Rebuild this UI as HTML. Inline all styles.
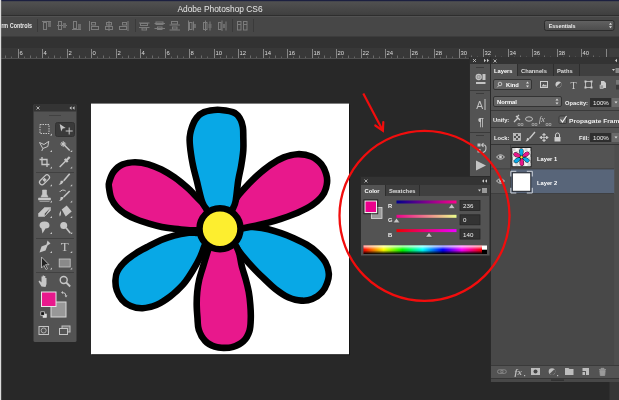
<!DOCTYPE html><html><head><meta charset="utf-8"><title>Adobe Photoshop CS6</title>
<style>html,body{margin:0;padding:0;background:#282828;overflow:hidden}svg{display:block;will-change:transform}text{font-family:"Liberation Sans",sans-serif}</style></head><body>
<svg width="619" height="400" viewBox="0 0 619 400">
<defs>
<linearGradient id="tb" x1="0" y1="0" x2="0" y2="1"><stop offset="0" stop-color="#535353"/><stop offset="1" stop-color="#3f3f3f"/></linearGradient>
<linearGradient id="dd" x1="0" y1="0" x2="0" y2="1"><stop offset="0" stop-color="#626262"/><stop offset="1" stop-color="#4c4c4c"/></linearGradient>
<linearGradient id="gr" x1="0" y1="0" x2="1" y2="0"><stop offset="0" stop-color="#00008c"/><stop offset="1" stop-color="#ff008c"/></linearGradient>
<linearGradient id="gg" x1="0" y1="0" x2="1" y2="0"><stop offset="0" stop-color="#ec008c"/><stop offset="1" stop-color="#ecff8c"/></linearGradient>
<linearGradient id="gb" x1="0" y1="0" x2="1" y2="0"><stop offset="0" stop-color="#ec0000"/><stop offset="1" stop-color="#ec00ff"/></linearGradient>
<linearGradient id="sp" x1="0" y1="0" x2="1" y2="0">
<stop offset="0" stop-color="#ff0000"/><stop offset="0.17" stop-color="#ffff00"/><stop offset="0.33" stop-color="#00ff00"/><stop offset="0.5" stop-color="#00ffff"/><stop offset="0.67" stop-color="#0000ff"/><stop offset="0.83" stop-color="#ff00ff"/><stop offset="1" stop-color="#ff0000"/></linearGradient>
<linearGradient id="spv" x1="0" y1="0" x2="0" y2="1"><stop offset="0" stop-color="#fff" stop-opacity="0.9"/><stop offset="0.45" stop-color="#fff" stop-opacity="0"/><stop offset="0.55" stop-color="#000" stop-opacity="0"/><stop offset="1" stop-color="#000" stop-opacity="1"/></linearGradient>
</defs>
<rect x="0" y="0" width="619" height="400" fill="#282828" />
<rect x="0" y="0" width="619" height="15" fill="url(#tb)" />
<rect x="0" y="0" width="619" height="1.2" fill="#1c2040" />
<text x="220" y="11.8" font-size="8.4" fill="#e6e6e6" font-weight="normal" text-anchor="middle" >Adobe Photoshop CS6</text>
<rect x="0" y="15" width="619" height="21.5" fill="#474747" />
<rect x="0" y="15" width="619" height="1" fill="#2e2e2e" />
<rect x="0" y="16" width="619" height="1" fill="#525252" />
<rect x="0" y="36" width="619" height="0.8" fill="#2a2a2a" />
<text transform="translate(1.2 28.4) scale(0.84 1)" font-size="6.5" fill="#e6e6e6" font-weight="bold" text-anchor="start" >rm Controls</text>
<rect x="37" y="19" width="1" height="13" fill="#3a3a3a" />
<rect x="135" y="19" width="1" height="13" fill="#3a3a3a" />
<rect x="232" y="19" width="1" height="13" fill="#3a3a3a" />
<rect x="253" y="19" width="1" height="13" fill="#3a3a3a" />
<rect x="42" y="21" width="9" height="1" fill="#7c7c7c" />
<rect x="43.5" y="22.5" width="3" height="7" fill="none" stroke="#7c7c7c" stroke-width="1"/>
<rect x="48" y="22" width="3" height="5" fill="#6c6c6c" />
<rect x="57" y="25" width="10" height="1" fill="#7c7c7c" />
<rect x="58.5" y="21.5" width="3" height="8" fill="none" stroke="#7c7c7c" stroke-width="1"/>
<rect x="63" y="23" width="3" height="5" fill="#6c6c6c" />
<rect x="72" y="29" width="9" height="1" fill="#7c7c7c" />
<rect x="73.5" y="21.5" width="3" height="7" fill="none" stroke="#7c7c7c" stroke-width="1"/>
<rect x="78" y="24" width="3" height="5" fill="#6c6c6c" />
<rect x="89" y="21" width="1" height="10" fill="#7c7c7c" />
<rect x="91.5" y="22.5" width="4" height="2.5" fill="none" stroke="#7c7c7c" stroke-width="1"/>
<rect x="91.5" y="26.5" width="7" height="3" fill="none" stroke="#7c7c7c" stroke-width="1"/>
<rect x="108.5" y="21" width="1" height="10" fill="#7c7c7c" />
<rect x="106.5" y="22.5" width="5" height="2.5" fill="none" stroke="#7c7c7c" stroke-width="1"/>
<rect x="105.5" y="26.5" width="7" height="3" fill="none" stroke="#7c7c7c" stroke-width="1"/>
<rect x="127.5" y="21" width="1" height="10" fill="#7c7c7c" />
<rect x="122.5" y="22.5" width="4" height="2.5" fill="none" stroke="#7c7c7c" stroke-width="1"/>
<rect x="119.5" y="26.5" width="7" height="3" fill="none" stroke="#7c7c7c" stroke-width="1"/>
<rect x="139" y="22.5" width="10.5" height="1" fill="#7c7c7c" />
<rect x="140.5" y="23.5" width="7" height="2" fill="none" stroke="#7c7c7c" stroke-width="1"/>
<rect x="139" y="27" width="10.5" height="1" fill="#7c7c7c" />
<rect x="142" y="28" width="4.5" height="2" fill="none" stroke="#7c7c7c" stroke-width="1"/>
<rect x="156.0" y="22" width="7" height="2.5" fill="none" stroke="#7c7c7c" stroke-width="1"/>
<rect x="154.5" y="23" width="10.5" height="1" fill="#7c7c7c" />
<rect x="157.5" y="27" width="4.5" height="2.5" fill="none" stroke="#7c7c7c" stroke-width="1"/>
<rect x="154.5" y="28" width="10.5" height="1" fill="#7c7c7c" />
<rect x="171.5" y="21.5" width="6" height="2.5" fill="none" stroke="#7c7c7c" stroke-width="1"/>
<rect x="169.5" y="24.5" width="10.5" height="1" fill="#7c7c7c" />
<rect x="172.5" y="27" width="4.5" height="2" fill="none" stroke="#7c7c7c" stroke-width="1"/>
<rect x="169.5" y="29.5" width="10.5" height="1" fill="#7c7c7c" />
<rect x="188" y="20.5" width="1" height="10.5" fill="#7c7c7c" />
<rect x="189.5" y="22.5" width="2.5" height="7" fill="none" stroke="#7c7c7c" stroke-width="1"/>
<rect x="193" y="21.5" width="1" height="9" fill="#7c7c7c" />
<rect x="194" y="24" width="2" height="4" fill="#6c6c6c" />
<rect x="205" y="20.5" width="1" height="10.5" fill="#7c7c7c" />
<rect x="203.5" y="22.5" width="3.5" height="7" fill="none" stroke="#7c7c7c" stroke-width="1"/>
<rect x="209.5" y="21.5" width="1" height="9" fill="#7c7c7c" />
<rect x="208.5" y="24" width="3" height="4" fill="#6c6c6c" />
<rect x="221.5" y="20.5" width="1" height="10.5" fill="#7c7c7c" />
<rect x="218.5" y="22.5" width="2.5" height="7" fill="none" stroke="#7c7c7c" stroke-width="1"/>
<rect x="225.5" y="21.5" width="1" height="9" fill="#7c7c7c" />
<rect x="223" y="24" width="2" height="4" fill="#6c6c6c" />
<rect x="237.5" y="21.5" width="3.5" height="8.5" fill="none" stroke="#7c7c7c" stroke-width="1"/>
<rect x="243.5" y="21.5" width="3.5" height="8.5" fill="none" stroke="#7c7c7c" stroke-width="1"/>
<rect x="238" y="24" width="3" height="1" fill="#7c7c7c" />
<rect x="244" y="24" width="3" height="1" fill="#7c7c7c" />
<rect x="544.500" y="20.500" width="69.500" height="10" rx="1.800" fill="url(#dd)" stroke="#2c2c2c"/>
<text transform="translate(548.7 27.7) scale(0.91 1)" font-size="6" fill="#eee" font-weight="bold" text-anchor="start" >Essentials</text>
<path d="M609 24.700 l1.500 -2 l1.500 2z M609 26.300 l1.500 2 l1.500 -2z" fill="#ddd"/>
<rect x="0" y="36" width="619" height="12" fill="#323232" />
<rect x="0" y="36" width="619" height="1" fill="#3c3c3c" />
<rect x="0" y="48" width="619" height="10" fill="#383838" />
<rect x="0" y="58" width="619" height="1" fill="#505050" />
<rect x="5" y="55.5" width="1" height="2.5" fill="#6c6c6c" />
<rect x="11" y="56.5" width="1" height="1.5" fill="#646464" />
<rect x="18" y="49" width="1" height="9" fill="#858585" />
<text x="19.6" y="55" font-size="5.9" fill="#dcdcdc" font-weight="normal" text-anchor="start" >6</text>
<rect x="24" y="56.5" width="1" height="1.5" fill="#646464" />
<rect x="30" y="55.5" width="1" height="2.5" fill="#6c6c6c" />
<rect x="36" y="56.5" width="1" height="1.5" fill="#646464" />
<rect x="42" y="49" width="1" height="9" fill="#858585" />
<text x="43.6" y="55" font-size="5.9" fill="#dcdcdc" font-weight="normal" text-anchor="start" >4</text>
<rect x="48" y="56.5" width="1" height="1.5" fill="#646464" />
<rect x="54" y="55.5" width="1" height="2.5" fill="#6c6c6c" />
<rect x="60" y="56.5" width="1" height="1.5" fill="#646464" />
<rect x="67" y="49" width="1" height="9" fill="#858585" />
<text x="68.6" y="55" font-size="5.9" fill="#dcdcdc" font-weight="normal" text-anchor="start" >2</text>
<rect x="73" y="56.5" width="1" height="1.5" fill="#646464" />
<rect x="79" y="55.5" width="1" height="2.5" fill="#6c6c6c" />
<rect x="85" y="56.5" width="1" height="1.5" fill="#646464" />
<rect x="91" y="49" width="1" height="9" fill="#858585" />
<text x="92.6" y="55" font-size="5.9" fill="#dcdcdc" font-weight="normal" text-anchor="start" >0</text>
<rect x="97" y="56.5" width="1" height="1.5" fill="#646464" />
<rect x="103" y="55.5" width="1" height="2.5" fill="#6c6c6c" />
<rect x="109" y="56.5" width="1" height="1.5" fill="#646464" />
<rect x="116" y="49" width="1" height="9" fill="#858585" />
<text x="117.6" y="55" font-size="5.9" fill="#dcdcdc" font-weight="normal" text-anchor="start" >2</text>
<rect x="122" y="56.5" width="1" height="1.5" fill="#646464" />
<rect x="128" y="55.5" width="1" height="2.5" fill="#6c6c6c" />
<rect x="134" y="56.5" width="1" height="1.5" fill="#646464" />
<rect x="140" y="49" width="1" height="9" fill="#858585" />
<text x="141.6" y="55" font-size="5.9" fill="#dcdcdc" font-weight="normal" text-anchor="start" >4</text>
<rect x="146" y="56.5" width="1" height="1.5" fill="#646464" />
<rect x="152" y="55.5" width="1" height="2.5" fill="#6c6c6c" />
<rect x="158" y="56.5" width="1" height="1.5" fill="#646464" />
<rect x="165" y="49" width="1" height="9" fill="#858585" />
<text x="166.6" y="55" font-size="5.9" fill="#dcdcdc" font-weight="normal" text-anchor="start" >6</text>
<rect x="171" y="56.5" width="1" height="1.5" fill="#646464" />
<rect x="177" y="55.5" width="1" height="2.5" fill="#6c6c6c" />
<rect x="183" y="56.5" width="1" height="1.5" fill="#646464" />
<rect x="189" y="49" width="1" height="9" fill="#858585" />
<text x="190.6" y="55" font-size="5.9" fill="#dcdcdc" font-weight="normal" text-anchor="start" >8</text>
<rect x="195" y="56.5" width="1" height="1.5" fill="#646464" />
<rect x="201" y="55.5" width="1" height="2.5" fill="#6c6c6c" />
<rect x="207" y="56.5" width="1" height="1.5" fill="#646464" />
<rect x="214" y="49" width="1" height="9" fill="#858585" />
<text x="215.6" y="55" font-size="5.9" fill="#dcdcdc" font-weight="normal" text-anchor="start" >10</text>
<rect x="220" y="56.5" width="1" height="1.5" fill="#646464" />
<rect x="226" y="55.5" width="1" height="2.5" fill="#6c6c6c" />
<rect x="232" y="56.5" width="1" height="1.5" fill="#646464" />
<rect x="238" y="49" width="1" height="9" fill="#858585" />
<text x="239.6" y="55" font-size="5.9" fill="#dcdcdc" font-weight="normal" text-anchor="start" >12</text>
<rect x="244" y="56.5" width="1" height="1.5" fill="#646464" />
<rect x="250" y="55.5" width="1" height="2.5" fill="#6c6c6c" />
<rect x="256" y="56.5" width="1" height="1.5" fill="#646464" />
<rect x="263" y="49" width="1" height="9" fill="#858585" />
<text x="264.6" y="55" font-size="5.9" fill="#dcdcdc" font-weight="normal" text-anchor="start" >14</text>
<rect x="269" y="56.5" width="1" height="1.5" fill="#646464" />
<rect x="275" y="55.5" width="1" height="2.5" fill="#6c6c6c" />
<rect x="281" y="56.5" width="1" height="1.5" fill="#646464" />
<rect x="287" y="49" width="1" height="9" fill="#858585" />
<text x="288.6" y="55" font-size="5.9" fill="#dcdcdc" font-weight="normal" text-anchor="start" >16</text>
<rect x="293" y="56.5" width="1" height="1.5" fill="#646464" />
<rect x="299" y="55.5" width="1" height="2.5" fill="#6c6c6c" />
<rect x="305" y="56.5" width="1" height="1.5" fill="#646464" />
<rect x="312" y="49" width="1" height="9" fill="#858585" />
<text x="313.6" y="55" font-size="5.9" fill="#dcdcdc" font-weight="normal" text-anchor="start" >18</text>
<rect x="318" y="56.5" width="1" height="1.5" fill="#646464" />
<rect x="324" y="55.5" width="1" height="2.5" fill="#6c6c6c" />
<rect x="330" y="56.5" width="1" height="1.5" fill="#646464" />
<rect x="336" y="49" width="1" height="9" fill="#858585" />
<text x="337.6" y="55" font-size="5.9" fill="#dcdcdc" font-weight="normal" text-anchor="start" >20</text>
<rect x="342" y="56.5" width="1" height="1.5" fill="#646464" />
<rect x="348" y="55.5" width="1" height="2.5" fill="#6c6c6c" />
<rect x="354" y="56.5" width="1" height="1.5" fill="#646464" />
<rect x="361" y="49" width="1" height="9" fill="#858585" />
<text x="362.6" y="55" font-size="5.9" fill="#dcdcdc" font-weight="normal" text-anchor="start" >22</text>
<rect x="367" y="56.5" width="1" height="1.5" fill="#646464" />
<rect x="373" y="55.5" width="1" height="2.5" fill="#6c6c6c" />
<rect x="379" y="56.5" width="1" height="1.5" fill="#646464" />
<rect x="385" y="49" width="1" height="9" fill="#858585" />
<text x="386.6" y="55" font-size="5.9" fill="#dcdcdc" font-weight="normal" text-anchor="start" >24</text>
<rect x="391" y="56.5" width="1" height="1.5" fill="#646464" />
<rect x="397" y="55.5" width="1" height="2.5" fill="#6c6c6c" />
<rect x="403" y="56.5" width="1" height="1.5" fill="#646464" />
<rect x="410" y="49" width="1" height="9" fill="#858585" />
<text x="411.6" y="55" font-size="5.9" fill="#dcdcdc" font-weight="normal" text-anchor="start" >26</text>
<rect x="416" y="56.5" width="1" height="1.5" fill="#646464" />
<rect x="422" y="55.5" width="1" height="2.5" fill="#6c6c6c" />
<rect x="428" y="56.5" width="1" height="1.5" fill="#646464" />
<rect x="434" y="49" width="1" height="9" fill="#858585" />
<text x="435.6" y="55" font-size="5.9" fill="#dcdcdc" font-weight="normal" text-anchor="start" >28</text>
<rect x="440" y="56.5" width="1" height="1.5" fill="#646464" />
<rect x="446" y="55.5" width="1" height="2.5" fill="#6c6c6c" />
<rect x="452" y="56.5" width="1" height="1.5" fill="#646464" />
<rect x="459" y="49" width="1" height="9" fill="#858585" />
<text x="460.6" y="55" font-size="5.9" fill="#dcdcdc" font-weight="normal" text-anchor="start" >30</text>
<rect x="465" y="56.5" width="1" height="1.5" fill="#646464" />
<rect x="471" y="55.5" width="1" height="2.5" fill="#6c6c6c" />
<rect x="477" y="56.5" width="1" height="1.5" fill="#646464" />
<rect x="483" y="49" width="1" height="9" fill="#858585" />
<text x="484.6" y="55" font-size="5.9" fill="#dcdcdc" font-weight="normal" text-anchor="start" >32</text>
<rect x="489" y="56.5" width="1" height="1.5" fill="#646464" />
<rect x="495" y="55.5" width="1" height="2.5" fill="#6c6c6c" />
<rect x="501" y="56.5" width="1" height="1.5" fill="#646464" />
<rect x="508" y="49" width="1" height="9" fill="#858585" />
<text x="509.6" y="55" font-size="5.9" fill="#dcdcdc" font-weight="normal" text-anchor="start" >34</text>
<rect x="514" y="56.5" width="1" height="1.5" fill="#646464" />
<rect x="520" y="55.5" width="1" height="2.5" fill="#6c6c6c" />
<rect x="526" y="56.5" width="1" height="1.5" fill="#646464" />
<rect x="532" y="49" width="1" height="9" fill="#858585" />
<text x="533.6" y="55" font-size="5.9" fill="#dcdcdc" font-weight="normal" text-anchor="start" >36</text>
<rect x="538" y="56.5" width="1" height="1.5" fill="#646464" />
<rect x="544" y="55.5" width="1" height="2.5" fill="#6c6c6c" />
<rect x="550" y="56.5" width="1" height="1.5" fill="#646464" />
<rect x="557" y="49" width="1" height="9" fill="#858585" />
<text x="558.6" y="55" font-size="5.9" fill="#dcdcdc" font-weight="normal" text-anchor="start" >38</text>
<rect x="563" y="56.5" width="1" height="1.5" fill="#646464" />
<rect x="569" y="55.5" width="1" height="2.5" fill="#6c6c6c" />
<rect x="575" y="56.5" width="1" height="1.5" fill="#646464" />
<rect x="581" y="49" width="1" height="9" fill="#858585" />
<text x="582.6" y="55" font-size="5.9" fill="#dcdcdc" font-weight="normal" text-anchor="start" >40</text>
<rect x="587" y="56.5" width="1" height="1.5" fill="#646464" />
<rect x="593" y="55.5" width="1" height="2.5" fill="#6c6c6c" />
<rect x="599" y="56.5" width="1" height="1.5" fill="#646464" />
<rect x="606" y="49" width="1" height="9" fill="#858585" />
<rect x="612" y="56.5" width="1" height="1.5" fill="#646464" />
<rect x="618" y="55.5" width="1" height="2.5" fill="#6c6c6c" />
<rect x="0" y="0" width="1" height="400" fill="#dcdcdc" />
<rect x="1" y="0" width="1" height="400" fill="#888" opacity="0.35"/>
<rect x="92" y="104.6" width="258" height="250.6" fill="#141414" />
<rect x="91" y="103.6" width="258" height="250.6" fill="#ffffff" />
<g transform="">
<circle cx="220" cy="228.800" r="33" fill="#000"/>
<path d="M 238.00 231.00 C 238.75 230.92 239.67 230.58 242.50 230.50 C 245.33 230.42 250.83 230.17 255.00 230.50 C 259.17 230.83 263.33 231.54 267.50 232.50 C 271.67 233.46 275.83 234.79 280.00 236.25 C 284.17 237.71 288.33 239.38 292.50 241.25 C 296.67 243.12 301.25 245.21 305.00 247.50 C 308.75 249.79 312.08 252.29 315.00 255.00 C 317.92 257.71 320.75 260.62 322.50 263.75 C 324.25 266.88 325.25 270.71 325.50 273.75 C 325.75 276.79 325.00 279.29 324.00 282.00 C 323.00 284.71 321.67 287.67 319.50 290.00 C 317.33 292.33 314.00 294.78 311.00 296.00 C 308.00 297.22 305.00 297.55 301.50 297.30 C 298.00 297.05 294.00 296.30 290.00 294.50 C 286.00 292.70 281.67 289.75 277.50 286.50 C 273.33 283.25 268.75 278.58 265.00 275.00 C 261.25 271.42 258.12 268.33 255.00 265.00 C 251.88 261.67 248.96 258.33 246.25 255.00 C 243.54 251.67 240.42 247.50 238.75 245.00 C 237.08 242.50 237.21 241.50 236.25 240.00 C 235.29 238.50 233.54 236.67 233.00 236.00 L 219.3 228 Z" fill="#08a8e6" stroke="#000" stroke-width="13.2" stroke-linejoin="round"/>
<path d="M 238.00 231.00 C 238.75 230.92 239.67 230.58 242.50 230.50 C 245.33 230.42 250.83 230.17 255.00 230.50 C 259.17 230.83 263.33 231.54 267.50 232.50 C 271.67 233.46 275.83 234.79 280.00 236.25 C 284.17 237.71 288.33 239.38 292.50 241.25 C 296.67 243.12 301.25 245.21 305.00 247.50 C 308.75 249.79 312.08 252.29 315.00 255.00 C 317.92 257.71 320.75 260.62 322.50 263.75 C 324.25 266.88 325.25 270.71 325.50 273.75 C 325.75 276.79 325.00 279.29 324.00 282.00 C 323.00 284.71 321.67 287.67 319.50 290.00 C 317.33 292.33 314.00 294.78 311.00 296.00 C 308.00 297.22 305.00 297.55 301.50 297.30 C 298.00 297.05 294.00 296.30 290.00 294.50 C 286.00 292.70 281.67 289.75 277.50 286.50 C 273.33 283.25 268.75 278.58 265.00 275.00 C 261.25 271.42 258.12 268.33 255.00 265.00 C 251.88 261.67 248.96 258.33 246.25 255.00 C 243.54 251.67 240.42 247.50 238.75 245.00 C 237.08 242.50 237.21 241.50 236.25 240.00 C 235.29 238.50 233.54 236.67 233.00 236.00 L 219.3 228 Z" fill="#08a8e6"/>
<path d="M 201.00 236.00 C 200.42 236.04 199.75 236.21 197.50 236.25 C 195.25 236.29 191.25 235.83 187.50 236.25 C 183.75 236.67 179.17 237.62 175.00 238.75 C 170.83 239.88 166.67 241.25 162.50 243.00 C 158.33 244.75 154.17 247.04 150.00 249.25 C 145.83 251.46 141.25 253.83 137.50 256.25 C 133.75 258.67 130.33 261.04 127.50 263.75 C 124.67 266.46 121.96 269.71 120.50 272.50 C 119.04 275.29 118.83 277.67 118.75 280.50 C 118.67 283.33 119.04 286.67 120.00 289.50 C 120.96 292.33 122.50 295.25 124.50 297.50 C 126.50 299.75 129.00 301.75 132.00 303.00 C 135.00 304.25 138.67 305.17 142.50 305.00 C 146.33 304.83 150.75 303.83 155.00 302.00 C 159.25 300.17 163.75 297.25 168.00 294.00 C 172.25 290.75 176.83 286.71 180.50 282.50 C 184.17 278.29 187.17 273.33 190.00 268.75 C 192.83 264.17 195.62 258.96 197.50 255.00 C 199.38 251.04 200.17 247.50 201.25 245.00 C 202.33 242.50 203.54 240.83 204.00 240.00 L 219.3 228 Z" fill="#08a8e6" stroke="#000" stroke-width="13.2" stroke-linejoin="round"/>
<path d="M 201.00 236.00 C 200.42 236.04 199.75 236.21 197.50 236.25 C 195.25 236.29 191.25 235.83 187.50 236.25 C 183.75 236.67 179.17 237.62 175.00 238.75 C 170.83 239.88 166.67 241.25 162.50 243.00 C 158.33 244.75 154.17 247.04 150.00 249.25 C 145.83 251.46 141.25 253.83 137.50 256.25 C 133.75 258.67 130.33 261.04 127.50 263.75 C 124.67 266.46 121.96 269.71 120.50 272.50 C 119.04 275.29 118.83 277.67 118.75 280.50 C 118.67 283.33 119.04 286.67 120.00 289.50 C 120.96 292.33 122.50 295.25 124.50 297.50 C 126.50 299.75 129.00 301.75 132.00 303.00 C 135.00 304.25 138.67 305.17 142.50 305.00 C 146.33 304.83 150.75 303.83 155.00 302.00 C 159.25 300.17 163.75 297.25 168.00 294.00 C 172.25 290.75 176.83 286.71 180.50 282.50 C 184.17 278.29 187.17 273.33 190.00 268.75 C 192.83 264.17 195.62 258.96 197.50 255.00 C 199.38 251.04 200.17 247.50 201.25 245.00 C 202.33 242.50 203.54 240.83 204.00 240.00 L 219.3 228 Z" fill="#08a8e6"/>
<path d="M 236.00 206.00 C 236.67 204.79 238.08 201.42 240.00 198.75 C 241.92 196.08 244.17 193.54 247.50 190.00 C 250.83 186.46 255.83 181.25 260.00 177.50 C 264.17 173.75 268.33 170.33 272.50 167.50 C 276.67 164.67 280.83 162.17 285.00 160.50 C 289.17 158.83 293.33 157.67 297.50 157.50 C 301.67 157.33 306.46 158.04 310.00 159.50 C 313.54 160.96 316.58 163.67 318.75 166.25 C 320.92 168.83 322.17 172.29 323.00 175.00 C 323.83 177.71 324.04 179.79 323.75 182.50 C 323.46 185.21 322.71 188.54 321.25 191.25 C 319.79 193.96 317.71 196.38 315.00 198.75 C 312.29 201.12 308.75 203.42 305.00 205.50 C 301.25 207.58 296.67 209.54 292.50 211.25 C 288.33 212.96 284.17 214.38 280.00 215.75 C 275.83 217.12 271.67 218.38 267.50 219.50 C 263.33 220.62 258.75 221.67 255.00 222.50 C 251.25 223.33 247.83 223.92 245.00 224.50 C 242.17 225.08 239.17 225.75 238.00 226.00 L 219.3 228 Z" fill="#e8188c" stroke="#000" stroke-width="13.2" stroke-linejoin="round"/>
<path d="M 236.00 206.00 C 236.67 204.79 238.08 201.42 240.00 198.75 C 241.92 196.08 244.17 193.54 247.50 190.00 C 250.83 186.46 255.83 181.25 260.00 177.50 C 264.17 173.75 268.33 170.33 272.50 167.50 C 276.67 164.67 280.83 162.17 285.00 160.50 C 289.17 158.83 293.33 157.67 297.50 157.50 C 301.67 157.33 306.46 158.04 310.00 159.50 C 313.54 160.96 316.58 163.67 318.75 166.25 C 320.92 168.83 322.17 172.29 323.00 175.00 C 323.83 177.71 324.04 179.79 323.75 182.50 C 323.46 185.21 322.71 188.54 321.25 191.25 C 319.79 193.96 317.71 196.38 315.00 198.75 C 312.29 201.12 308.75 203.42 305.00 205.50 C 301.25 207.58 296.67 209.54 292.50 211.25 C 288.33 212.96 284.17 214.38 280.00 215.75 C 275.83 217.12 271.67 218.38 267.50 219.50 C 263.33 220.62 258.75 221.67 255.00 222.50 C 251.25 223.33 247.83 223.92 245.00 224.50 C 242.17 225.08 239.17 225.75 238.00 226.00 L 219.3 228 Z" fill="#e8188c"/>
<path d="M 200.00 205.00 C 198.96 203.96 196.25 201.25 193.75 198.75 C 191.25 196.25 188.54 193.12 185.00 190.00 C 181.46 186.88 176.67 182.92 172.50 180.00 C 168.33 177.08 164.17 174.58 160.00 172.50 C 155.83 170.42 151.67 168.67 147.50 167.50 C 143.33 166.33 138.96 165.50 135.00 165.50 C 131.04 165.50 126.88 166.12 123.75 167.50 C 120.62 168.88 118.12 171.25 116.25 173.75 C 114.38 176.25 113.17 180.29 112.50 182.50 C 111.83 184.71 111.92 184.50 112.25 187.00 C 112.58 189.50 113.21 194.42 114.50 197.50 C 115.79 200.58 117.83 203.21 120.00 205.50 C 122.17 207.79 124.58 209.46 127.50 211.25 C 130.42 213.04 133.75 214.71 137.50 216.25 C 141.25 217.79 145.83 219.25 150.00 220.50 C 154.17 221.75 158.33 222.92 162.50 223.75 C 166.67 224.58 170.83 225.00 175.00 225.50 C 179.17 226.00 183.96 226.50 187.50 226.75 C 191.04 227.00 194.17 226.96 196.25 227.00 C 198.33 227.04 199.38 227.00 200.00 227.00 L 219.3 228 Z" fill="#e8188c" stroke="#000" stroke-width="13.2" stroke-linejoin="round"/>
<path d="M 200.00 205.00 C 198.96 203.96 196.25 201.25 193.75 198.75 C 191.25 196.25 188.54 193.12 185.00 190.00 C 181.46 186.88 176.67 182.92 172.50 180.00 C 168.33 177.08 164.17 174.58 160.00 172.50 C 155.83 170.42 151.67 168.67 147.50 167.50 C 143.33 166.33 138.96 165.50 135.00 165.50 C 131.04 165.50 126.88 166.12 123.75 167.50 C 120.62 168.88 118.12 171.25 116.25 173.75 C 114.38 176.25 113.17 180.29 112.50 182.50 C 111.83 184.71 111.92 184.50 112.25 187.00 C 112.58 189.50 113.21 194.42 114.50 197.50 C 115.79 200.58 117.83 203.21 120.00 205.50 C 122.17 207.79 124.58 209.46 127.50 211.25 C 130.42 213.04 133.75 214.71 137.50 216.25 C 141.25 217.79 145.83 219.25 150.00 220.50 C 154.17 221.75 158.33 222.92 162.50 223.75 C 166.67 224.58 170.83 225.00 175.00 225.50 C 179.17 226.00 183.96 226.50 187.50 226.75 C 191.04 227.00 194.17 226.96 196.25 227.00 C 198.33 227.04 199.38 227.00 200.00 227.00 L 219.3 228 Z" fill="#e8188c"/>
<path d="M 212.00 249.00 C 211.67 250.00 210.96 251.92 210.00 255.00 C 209.04 258.08 207.50 263.33 206.25 267.50 C 205.00 271.67 203.46 275.83 202.50 280.00 C 201.54 284.17 200.92 288.33 200.50 292.50 C 200.08 296.67 199.96 300.83 200.00 305.00 C 200.04 309.17 200.42 313.50 200.75 317.50 C 201.08 321.50 200.88 325.48 202.00 329.00 C 203.12 332.52 205.17 336.17 207.50 338.60 C 209.83 341.03 213.29 342.60 216.00 343.60 C 218.71 344.60 221.08 344.58 223.75 344.60 C 226.42 344.62 229.12 344.63 232.00 343.70 C 234.88 342.77 238.62 341.28 241.00 339.00 C 243.38 336.72 245.22 333.58 246.30 330.00 C 247.38 326.42 247.38 321.67 247.50 317.50 C 247.62 313.33 247.33 309.17 247.00 305.00 C 246.67 300.83 246.25 296.67 245.50 292.50 C 244.75 288.33 243.62 284.17 242.50 280.00 C 241.38 275.83 239.79 271.67 238.75 267.50 C 237.71 263.33 237.04 258.08 236.25 255.00 C 235.46 251.92 234.38 250.00 234.00 249.00 L 219.3 228 Z" fill="#e8188c" stroke="#000" stroke-width="13.2" stroke-linejoin="round"/>
<path d="M 212.00 249.00 C 211.67 250.00 210.96 251.92 210.00 255.00 C 209.04 258.08 207.50 263.33 206.25 267.50 C 205.00 271.67 203.46 275.83 202.50 280.00 C 201.54 284.17 200.92 288.33 200.50 292.50 C 200.08 296.67 199.96 300.83 200.00 305.00 C 200.04 309.17 200.42 313.50 200.75 317.50 C 201.08 321.50 200.88 325.48 202.00 329.00 C 203.12 332.52 205.17 336.17 207.50 338.60 C 209.83 341.03 213.29 342.60 216.00 343.60 C 218.71 344.60 221.08 344.58 223.75 344.60 C 226.42 344.62 229.12 344.63 232.00 343.70 C 234.88 342.77 238.62 341.28 241.00 339.00 C 243.38 336.72 245.22 333.58 246.30 330.00 C 247.38 326.42 247.38 321.67 247.50 317.50 C 247.62 313.33 247.33 309.17 247.00 305.00 C 246.67 300.83 246.25 296.67 245.50 292.50 C 244.75 288.33 243.62 284.17 242.50 280.00 C 241.38 275.83 239.79 271.67 238.75 267.50 C 237.71 263.33 237.04 258.08 236.25 255.00 C 235.46 251.92 234.38 250.00 234.00 249.00 L 219.3 228 Z" fill="#e8188c"/>
<path d="M 209.00 207.00 C 208.33 205.83 206.50 204.50 205.00 200.00 C 203.50 195.50 201.46 185.83 200.00 180.00 C 198.54 174.17 197.29 170.00 196.25 165.00 C 195.21 160.00 194.29 154.58 193.75 150.00 C 193.21 145.42 192.74 141.25 193.00 137.50 C 193.26 133.75 194.27 130.42 195.30 127.50 C 196.33 124.58 197.55 122.05 199.20 120.00 C 200.85 117.95 202.15 116.37 205.20 115.20 C 208.25 114.03 213.08 113.00 217.50 113.00 C 221.92 113.00 228.45 114.03 231.70 115.20 C 234.95 116.37 235.68 117.95 237.00 120.00 C 238.32 122.05 239.10 124.58 239.60 127.50 C 240.10 130.42 239.93 133.75 240.00 137.50 C 240.07 141.25 240.33 145.42 240.00 150.00 C 239.67 154.58 238.83 160.00 238.00 165.00 C 237.17 170.00 235.92 174.17 235.00 180.00 C 234.08 185.83 233.33 195.50 232.50 200.00 C 231.67 204.50 230.42 205.83 230.00 207.00 L 219.3 228 Z" fill="#08a8e6" stroke="#000" stroke-width="13.2" stroke-linejoin="round"/>
<path d="M 209.00 207.00 C 208.33 205.83 206.50 204.50 205.00 200.00 C 203.50 195.50 201.46 185.83 200.00 180.00 C 198.54 174.17 197.29 170.00 196.25 165.00 C 195.21 160.00 194.29 154.58 193.75 150.00 C 193.21 145.42 192.74 141.25 193.00 137.50 C 193.26 133.75 194.27 130.42 195.30 127.50 C 196.33 124.58 197.55 122.05 199.20 120.00 C 200.85 117.95 202.15 116.37 205.20 115.20 C 208.25 114.03 213.08 113.00 217.50 113.00 C 221.92 113.00 228.45 114.03 231.70 115.20 C 234.95 116.37 235.68 117.95 237.00 120.00 C 238.32 122.05 239.10 124.58 239.60 127.50 C 240.10 130.42 239.93 133.75 240.00 137.50 C 240.07 141.25 240.33 145.42 240.00 150.00 C 239.67 154.58 238.83 160.00 238.00 165.00 C 237.17 170.00 235.92 174.17 235.00 180.00 C 234.08 185.83 233.33 195.50 232.50 200.00 C 231.67 204.50 230.42 205.83 230.00 207.00 L 219.3 228 Z" fill="#08a8e6"/>
<circle cx="220" cy="228.800" r="20.500" fill="#fdee2f" stroke="#000" stroke-width="6.500"/>
</g>
<rect x="33.5" y="104" width="43" height="238" rx="1.5" fill="#535353"/>
<path d="M33.5 111.5 v-6 a1.5 1.5 0 0 1 1.5 -1.5 h40 a1.500 1.500 0 0 1 1.500 1.500 v6z" fill="#343434"/>
<path d="M36.500 106.500 l3 3 m0 -3 l-3 3" stroke="#ccc" stroke-width="0.8"/>
<path d="M69.500 108 l2 -1.800 v3.600z M72.500 108 l2 -1.800 v3.600z" fill="#ccc"/>
<rect x="49" y="115" width="12" height="1" fill="#414141" />
<rect x="55.5" y="122.5" width="19" height="14" rx="2" fill="#3a3a3a" stroke="#323232"/>
<rect x="40.0" y="124.5" width="9" height="9" fill="none" stroke="#c6c6c6" stroke-dasharray="1.5 1" />
<path d="M52.0 135.5 v-2 l-2 2z" fill="#c8c8c8"/>
<path d="M59.7 124 l6 4 l-3 0.5 l-1.5 3z" fill="#c6c6c6"/><path d="M65.7 131h7 M69.2 127.5v7" stroke="#c6c6c6" stroke-width="1"/>
<path d="M39.5 142.5 l4.500 2 l4.800 -3.200 l-1 5.200 l-5 2 z M42.8 148.5 l-1 2.500" fill="none" stroke="#c6c6c6" stroke-width="1"/>
<path d="M52.0 152.0 v-2 l-2 2z" fill="#c8c8c8"/>
<path d="M69.7 150.5 L64.2 145.0" stroke="#c6c6c6" stroke-width="1.500"/><path d="M63.2 141.0v6 M60.2 144.0h6 M61.2 142.0l4 4 M65.2 142.0l-4 4" stroke="#c6c6c6" stroke-width="0.900"/><circle cx="63.2" cy="144.0" r="1.500" fill="#c6c6c6"/>
<path d="M72.2 152.0 v-2 l-2 2z" fill="#c8c8c8"/>
<path d="M42.0 157 v7.500 h7.500 M39.5 159.5 h7.500 v7.500" fill="none" stroke="#c6c6c6" stroke-width="1.300"/>
<path d="M52.0 168.5 v-2 l-2 2z" fill="#c8c8c8"/>
<path d="M59.7 167 L65.7 161" stroke="#c6c6c6" stroke-width="1.4"/><path d="M64.7 159 l3 3 M66.7 160 l3 -3" stroke="#c6c6c6" stroke-width="2.2"/>
<path d="M72.2 168.5 v-2 l-2 2z" fill="#c8c8c8"/>
<rect x="38.5" y="177.3" width="12" height="5" rx="2.5" fill="none" stroke="#c6c6c6" stroke-width="1.2" transform="rotate(-45 44.5 179.8)"/><rect x="43.0" y="178.3" width="3" height="3" fill="#c6c6c6" transform="rotate(-45 44.5 179.8)"/>
<path d="M52.0 186.3 v-2 l-2 2z" fill="#c8c8c8"/>
<path d="M69.7 173.8 L63.7 180.8" stroke="#c6c6c6" stroke-width="1.6"/><path d="M63.7 180.8 q-1 4 -5 4 q2 -1 2 -4 z" fill="#c6c6c6"/>
<path d="M72.2 186.3 v-2 l-2 2z" fill="#c8c8c8"/>
<path d="M42.5 190 h4 v4 l1.5 3 h-7 l1.5 -3z M38.5 198 h12 v2 h-12z M39.5 201.5h10" fill="#c6c6c6" stroke="#c6c6c6" stroke-width="0.6"/>
<path d="M52.0 202.5 v-2 l-2 2z" fill="#c8c8c8"/>
<path d="M69.7 191 L63.7 197" stroke="#c6c6c6" stroke-width="1.6"/><path d="M63.7 197 q-1 4 -5 4 q2 -1 2 -4 z" fill="#c6c6c6"/><path d="M59.7 192 a4 4 0 0 1 6 -1" fill="none" stroke="#c6c6c6" stroke-width="1"/>
<path d="M72.2 202.5 v-2 l-2 2z" fill="#c8c8c8"/>
<path d="M38.5 213.5 l6 -6 h6 l-6 6z M38.5 213.5 v3 h6 v-3 M44.5 216.5 l6 -6 v-3" fill="#c6c6c6" stroke="#c6c6c6" stroke-width="0.5"/>
<path d="M52.0 218.0 v-2 l-2 2z" fill="#c8c8c8"/>
<path d="M61.7 209.5 l5 -4 l5 6 l-6 5 z" fill="#c6c6c6"/><path d="M60.7 210.5 q-2 3 -1 6 q2 -2 1 -6z" fill="#c6c6c6"/>
<path d="M72.2 218.0 v-2 l-2 2z" fill="#c8c8c8"/>
<path d="M39.5 225.5 q0 -4 5 -4 q5 0 5 4 q0 3 -4 3 l-3 5 l-1 -5 q-2 -1 -2 -3z" fill="#c6c6c6"/>
<path d="M52.0 234.0 v-2 l-2 2z" fill="#c8c8c8"/>
<circle cx="63.7" cy="225.5" r="3.5" fill="#c6c6c6"/><path d="M66.2 228.0 l4 5" stroke="#c6c6c6" stroke-width="1.6"/>
<path d="M72.2 234.0 v-2 l-2 2z" fill="#c8c8c8"/>
<path d="M47.5 240.5 l3 3 l-3 2 l-2 5 l-6 2 l2 -6 l5 -2 z" fill="#c6c6c6"/>
<path d="M52.0 253.0 v-2 l-2 2z" fill="#c8c8c8"/>
<text x="64.7" y="251.0" font-size="13" fill="#c6c6c6" text-anchor="middle" style="font-family:'Liberation Serif',serif">T</text>
<path d="M72.2 253.0 v-2 l-2 2z" fill="#c8c8c8"/>
<path d="M41.5 257 v11 l2.5 -2.5 l2 4 l1.5 -0.8 l-2 -4 h3.5z" fill="#222" stroke="#c6c6c6" stroke-width="0.8"/>
<path d="M52.0 269.5 v-2 l-2 2z" fill="#c8c8c8"/>
<rect x="59.2" y="259" width="11" height="8" fill="#8a8a8a" stroke="#c6c6c6" stroke-width="0.8"/>
<path d="M72.2 269.5 v-2 l-2 2z" fill="#c8c8c8"/>
<path d="M41.5 286.5 l-3 -5 l1 -1 l2 2 v-6 h1.2 v4 v-5 h1.3 v5 v-4.5 h1.3 v5 v-3 h1.2 v6 l-1 3z" fill="#c6c6c6"/>
<circle cx="63.7" cy="280.0" r="3.5" fill="none" stroke="#c6c6c6" stroke-width="1.4"/><path d="M66.2 282.5 l4 4" stroke="#c6c6c6" stroke-width="1.8"/>
<rect x="36" y="172" width="38" height="1" fill="#414141" />
<rect x="36" y="238" width="38" height="1" fill="#414141" />
<rect x="36" y="272" width="38" height="1" fill="#414141" />
<rect x="51" y="302" width="15" height="15" fill="#989898" stroke="#d8d8d8"/>
<rect x="41.500" y="292" width="14.500" height="14.500" fill="#e8188c" stroke="#e8e8e8"/>
<path d="M62.500 292.500 q3.500 0 3.500 3.500" fill="none" stroke="#c4c4c4"/><path d="M61 292.500 l2 -1.500 v3z M66 297.500 l-1.500 -2 h3z" fill="#c4c4c4"/>
<rect x="43" y="314" width="3.500" height="3.500" fill="#ddd" stroke="#ddd" stroke-width="0.6"/><rect x="40.800" y="311.800" width="3.500" height="3.500" fill="#111" stroke="#ddd" stroke-width="0.700"/>
<rect x="39" y="326.500" width="9.500" height="8" fill="none" stroke="#c4c4c4"/><circle cx="43.700" cy="330.500" r="2.500" fill="none" stroke="#c4c4c4" stroke-width="0.800"/>
<rect x="62" y="326" width="8" height="6" fill="#777" stroke="#c4c4c4"/><rect x="59.500" y="328.500" width="8" height="6" fill="#555" stroke="#c4c4c4"/>
<rect x="609.5" y="382" width="10" height="18" fill="#363636" />
<rect x="609.5" y="48.5" width="10" height="9" fill="#3e3e3e" />
<rect x="470" y="57" width="20" height="120" fill="#535353" />
<rect x="469" y="57" width="1" height="120" fill="#2a2a2a" />
<rect x="470" y="57" width="149" height="7" fill="#333333" />
<path d="M473 59 l3 3 m0 -3 l-3 3 M493.500 59.500 l3 3 m0 -3 l-3 3" stroke="#ccc" stroke-width="0.8"/>
<path d="M484 60.5 l2 -1.800 v3.600z M487 60.5 l2 -1.800 v3.600z" fill="#ccc" transform="rotate(180 486.500 60.500)"/>
<path d="M615 60.5 l2 -1.800 v3.600z" fill="#ccc"/>
<rect x="470" y="90" width="20" height="1" fill="#3a3a3a" />
<rect x="470" y="132" width="20" height="1" fill="#3a3a3a" />
<rect x="476" y="67" width="8" height="1" fill="#3c3c3c" />
<rect x="476" y="93" width="8" height="1" fill="#3c3c3c" />
<rect x="476" y="135" width="8" height="1" fill="#3c3c3c" />
<circle cx="478.700" cy="77" r="2.600" fill="#8a8a8a" stroke="#c4c4c4" stroke-width="1.100"/><path d="M477.200 77 h3 M478.700 75.500 v3" stroke="#c4c4c4" stroke-width="0.700"/><rect x="482.500" y="74" width="3" height="6" fill="#c4c4c4"/><rect x="476" y="82" width="9.500" height="2" fill="#c4c4c4"/>
<text transform="translate(479.8 109) scale(0.9 1)" font-size="11.5" fill="#c4c4c4" font-weight="normal" text-anchor="middle" >A</text>
<rect x="484.5" y="99" width="1" height="11" fill="#c4c4c4" />
<text x="480.8" y="126" font-size="10.5" fill="#c4c4c4" font-weight="bold" text-anchor="middle" >¶</text>
<path d="M477.500 143.500 h3 v3 h-3z M477.500 149 h3 v3.500 h-3z" fill="#c4c4c4"/><path d="M482 145 h2 q2 0 2 3 q0 4 -3.500 4.500 M481.500 145 l2 -1.800 M481.500 145 l2 1.800" fill="none" stroke="#c4c4c4" stroke-width="1.100"/>
<path d="M476 160.500 l10 5 l-10 5z" fill="#c4c4c4"/>
<rect x="491" y="64" width="128" height="318" fill="#535353" />
<rect x="491" y="194" width="123.5" height="171" fill="#484848" />
<rect x="490" y="57" width="1" height="325" fill="#2a2a2a" />
<rect x="491" y="64" width="128" height="12" fill="#3f3f3f" />
<rect x="491" y="64" width="26" height="12" fill="#535353" />
<rect x="517" y="64" width="1" height="12" fill="#2e2e2e" />
<rect x="553" y="64" width="1" height="12" fill="#2e2e2e" />
<rect x="579" y="64" width="1" height="12" fill="#2e2e2e" />
<text transform="translate(494 72.5) scale(0.93 1)" font-size="6.2" fill="#fff" font-weight="bold" text-anchor="start" >Layers</text>
<text transform="translate(521 72.5) scale(0.93 1)" font-size="6.2" fill="#ddd" font-weight="bold" text-anchor="start" >Channels</text>
<text transform="translate(557 72.5) scale(0.93 1)" font-size="6.2" fill="#ddd" font-weight="bold" text-anchor="start" >Paths</text>
<path d="M612 69 h3 l-1.500 2z" fill="#ccc"/><rect x="615.500" y="68" width="4" height="5" fill="#888"/>
<rect x="493.500" y="79.500" width="38" height="10" rx="1.500" fill="#646464" stroke="#333"/>
<circle cx="500" cy="84" r="1.800" fill="none" stroke="#ddd" stroke-width="0.8"/><path d="M498.800 85.500 l-1.500 1.800" stroke="#ddd" stroke-width="0.8"/>
<text transform="translate(506 87) scale(0.93 1)" font-size="6.2" fill="#fff" font-weight="bold" text-anchor="start" >Kind</text>
<path d="M526 83.500 l1.500 -2 l1.500 2z M526 85.500 l1.500 2 l1.500 -2z" fill="#ddd"/>
<rect x="540.500" y="81.500" width="7" height="6" fill="none" stroke="#ccc"/><path d="M541.500 86.500 l2 -2.500 l1.500 1.500 l1 -1 l1 2z" fill="#ccc"/>
<circle cx="558.500" cy="84.500" r="3" fill="#ccc"/><path d="M558.500 81.500 a3 3 0 0 1 0 6z" fill="#555" transform="rotate(45 558.500 84.500)"/>
<text x="573.500" y="88.500" font-size="10" fill="#ccc" text-anchor="middle" style="font-family:'Liberation Serif',serif">T</text>
<rect x="585.500" y="81.500" width="6" height="6" fill="none" stroke="#ccc" stroke-width="0.8"/><rect x="584.500" y="80.500" width="2" height="2" fill="#ccc"/><rect x="590.500" y="80.500" width="2" height="2" fill="#ccc"/><rect x="584.500" y="86.500" width="2" height="2" fill="#ccc"/><rect x="590.500" y="86.500" width="2" height="2" fill="#ccc"/>
<path d="M601 81 h3 l2 2 v5 h-5z" fill="#ccc"/><rect x="600" y="85" width="3.500" height="3.500" fill="#999" stroke="#ddd" stroke-width="0.5"/>
<rect x="616" y="80" width="3" height="4.500" fill="#777"/><rect x="616" y="85" width="3" height="4.500" fill="#3a3a3a"/>
<rect x="493.500" y="96.500" width="68" height="10" rx="1.500" fill="#646464" stroke="#333"/>
<text transform="translate(497 104) scale(0.93 1)" font-size="6.2" fill="#fff" font-weight="bold" text-anchor="start" >Normal</text>
<path d="M555.500 100.500 l1.500 -2 l1.500 2z M555.500 102.500 l1.500 2 l1.500 -2z" fill="#ddd"/>
<text transform="translate(565 104.5) scale(0.93 1)" font-size="6.2" fill="#f0f0f0" font-weight="bold" text-anchor="start" >Opacity:</text>
<rect x="590" y="98" width="21" height="9" fill="#2e2e2e" />
<text x="593" y="105" font-size="6.2" fill="#eee" font-weight="normal" text-anchor="start" >100%</text>
<rect x="612" y="98" width="7" height="9" fill="#6a6a6a" />
<path d="M614.500 101.500 h3 l-1.500 2z" fill="#ddd"/>
<rect x="491" y="110" width="128" height="1" fill="#3a3a3a" />
<text transform="translate(493 122) scale(0.93 1)" font-size="6.2" fill="#f0f0f0" font-weight="bold" text-anchor="start" >Unify:</text>
<path d="M514 122 l4 -4 m-2 -2 l4 4 m-3 -3 l2 -2" stroke="#ccc" stroke-width="1.2" fill="none"/><path d="M518 123.500 h2 v2h-2z M521 123.500 h2 v2h-2z" fill="none" stroke="#bbb" stroke-width="0.6"/>
<ellipse cx="529" cy="119" rx="3.500" ry="2.200" fill="none" stroke="#ccc" stroke-width="0.9"/><path d="M532 123.500 h2 v2h-2z M535 123.500 h2 v2h-2z" fill="none" stroke="#bbb" stroke-width="0.6"/>
<text x="539" y="122" font-size="8" font-style="italic" fill="#ccc" style="font-family:'Liberation Serif',serif">fx</text><path d="M546 123.500 h2 v2h-2z M549 123.500 h2 v2h-2z" fill="none" stroke="#bbb" stroke-width="0.6"/>
<rect x="559" y="116" width="7.500" height="7.500" rx="1" fill="#666" stroke="#333" stroke-width="0.8"/><path d="M560.500 119.500 l2 2.500 l4 -6" fill="none" stroke="#eee" stroke-width="1.200"/>
<text transform="translate(569 122.5) scale(1.07 1)" font-size="6.2" fill="#f0f0f0" font-weight="bold" text-anchor="start" >Propagate Frame 1</text>
<rect x="491" y="127" width="128" height="1" fill="#3a3a3a" />
<text transform="translate(494 139.5) scale(0.93 1)" font-size="6.2" fill="#f0f0f0" font-weight="bold" text-anchor="start" >Lock:</text>
<rect x="513.500" y="133.500" width="7" height="7" fill="none" stroke="#ccc" stroke-width="0.8"/><path d="M514 134 h2 v2 h-2z M518 134 h2 v2h-2z M516 136 h2 v2h-2z M514 138 h2 v2h-2z M518 138h2v2h-2z" fill="#bbb"/>
<path d="M535 132 L529.500 138.500" stroke="#ccc" stroke-width="1.300"/><path d="M529.500 138.500 q-1 3 -4 3 q1.500 -1 1.500 -3.500z" fill="#ccc"/>
<path d="M540 137.500 h8 M544 133.500 v8 M540 137.500 l1.500 -1.500 v3z M548 137.500 l-1.500 -1.500 v3z M544 133.500 l-1.500 1.500 h3z M544 141.500 l-1.500 -1.500 h3z" stroke="#ccc" stroke-width="0.8" fill="#ccc"/>
<rect x="554.500" y="137" width="6" height="4.500" fill="#ccc"/><path d="M555.500 137 v-2 a2 2 0 0 1 4 0 v2" fill="none" stroke="#ccc" stroke-width="1"/>
<text transform="translate(579 139.5) scale(0.93 1)" font-size="6.2" fill="#f0f0f0" font-weight="bold" text-anchor="start" >Fill:</text>
<rect x="590" y="133" width="21" height="9" fill="#2e2e2e" />
<text x="593" y="140" font-size="6.2" fill="#eee" font-weight="normal" text-anchor="start" >100%</text>
<rect x="612" y="133" width="7" height="9" fill="#6a6a6a" />
<path d="M614.500 136.500 h3 l-1.500 2z" fill="#ddd"/>
<rect x="491" y="144" width="128" height="1" fill="#333" />
<rect x="491" y="145" width="123.5" height="49" fill="#535353" />
<rect x="510" y="169" width="104.5" height="24.5" fill="#586579" />
<rect x="491" y="168.5" width="123" height="0.8" fill="#3a3a3a" />
<rect x="491" y="193" width="123" height="0.8" fill="#3a3a3a" />
<rect x="510" y="145" width="0.8" height="48" fill="#3f3f3f" />
<rect x="614.5" y="145" width="4.5" height="220" fill="#4e4e4e" />
<path d="M496.5 157 q4 -4.500 8 0 q-4 4.500 -8 0z" fill="none" stroke="#d0d0d0" stroke-width="0.9"/><circle cx="500.5" cy="157" r="1.400" fill="#d0d0d0"/>
<path d="M496.5 181 q4 -4.500 8 0 q-4 4.500 -8 0z" fill="none" stroke="#d0d0d0" stroke-width="0.9"/><circle cx="500.5" cy="181" r="1.400" fill="#d0d0d0"/>
<rect x="512" y="147.500" width="19" height="19.300" fill="#f4f4f4" stroke="#1e1e1e" stroke-width="1"/><rect x="512.5" y="148.0" width="3" height="3" fill="#d4d4d4"/><rect x="512.5" y="154.0" width="3" height="3" fill="#d4d4d4"/><rect x="512.5" y="160.0" width="3" height="3" fill="#d4d4d4"/><rect x="515.5" y="151.0" width="3" height="3" fill="#d4d4d4"/><rect x="515.5" y="157.0" width="3" height="3" fill="#d4d4d4"/><rect x="515.5" y="163.0" width="3" height="3" fill="#d4d4d4"/><rect x="518.5" y="148.0" width="3" height="3" fill="#d4d4d4"/><rect x="518.5" y="154.0" width="3" height="3" fill="#d4d4d4"/><rect x="518.5" y="160.0" width="3" height="3" fill="#d4d4d4"/><rect x="521.5" y="151.0" width="3" height="3" fill="#d4d4d4"/><rect x="521.5" y="157.0" width="3" height="3" fill="#d4d4d4"/><rect x="521.5" y="163.0" width="3" height="3" fill="#d4d4d4"/><rect x="524.5" y="148.0" width="3" height="3" fill="#d4d4d4"/><rect x="524.5" y="154.0" width="3" height="3" fill="#d4d4d4"/><rect x="524.5" y="160.0" width="3" height="3" fill="#d4d4d4"/><rect x="527.5" y="151.0" width="3" height="3" fill="#d4d4d4"/><rect x="527.5" y="157.0" width="3" height="3" fill="#d4d4d4"/><rect x="527.5" y="163.0" width="3" height="3" fill="#d4d4d4"/>
<g transform="translate(521.5 157.2) scale(0.072) translate(-219.3 -228)">
<circle cx="220" cy="228.800" r="33" fill="#000"/>
<path d="M 238.00 231.00 C 238.75 230.92 239.67 230.58 242.50 230.50 C 245.33 230.42 250.83 230.17 255.00 230.50 C 259.17 230.83 263.33 231.54 267.50 232.50 C 271.67 233.46 275.83 234.79 280.00 236.25 C 284.17 237.71 288.33 239.38 292.50 241.25 C 296.67 243.12 301.25 245.21 305.00 247.50 C 308.75 249.79 312.08 252.29 315.00 255.00 C 317.92 257.71 320.75 260.62 322.50 263.75 C 324.25 266.88 325.25 270.71 325.50 273.75 C 325.75 276.79 325.00 279.29 324.00 282.00 C 323.00 284.71 321.67 287.67 319.50 290.00 C 317.33 292.33 314.00 294.78 311.00 296.00 C 308.00 297.22 305.00 297.55 301.50 297.30 C 298.00 297.05 294.00 296.30 290.00 294.50 C 286.00 292.70 281.67 289.75 277.50 286.50 C 273.33 283.25 268.75 278.58 265.00 275.00 C 261.25 271.42 258.12 268.33 255.00 265.00 C 251.88 261.67 248.96 258.33 246.25 255.00 C 243.54 251.67 240.42 247.50 238.75 245.00 C 237.08 242.50 237.21 241.50 236.25 240.00 C 235.29 238.50 233.54 236.67 233.00 236.00 L 219.3 228 Z" fill="#08a8e6" stroke="#000" stroke-width="13.2" stroke-linejoin="round"/>
<path d="M 238.00 231.00 C 238.75 230.92 239.67 230.58 242.50 230.50 C 245.33 230.42 250.83 230.17 255.00 230.50 C 259.17 230.83 263.33 231.54 267.50 232.50 C 271.67 233.46 275.83 234.79 280.00 236.25 C 284.17 237.71 288.33 239.38 292.50 241.25 C 296.67 243.12 301.25 245.21 305.00 247.50 C 308.75 249.79 312.08 252.29 315.00 255.00 C 317.92 257.71 320.75 260.62 322.50 263.75 C 324.25 266.88 325.25 270.71 325.50 273.75 C 325.75 276.79 325.00 279.29 324.00 282.00 C 323.00 284.71 321.67 287.67 319.50 290.00 C 317.33 292.33 314.00 294.78 311.00 296.00 C 308.00 297.22 305.00 297.55 301.50 297.30 C 298.00 297.05 294.00 296.30 290.00 294.50 C 286.00 292.70 281.67 289.75 277.50 286.50 C 273.33 283.25 268.75 278.58 265.00 275.00 C 261.25 271.42 258.12 268.33 255.00 265.00 C 251.88 261.67 248.96 258.33 246.25 255.00 C 243.54 251.67 240.42 247.50 238.75 245.00 C 237.08 242.50 237.21 241.50 236.25 240.00 C 235.29 238.50 233.54 236.67 233.00 236.00 L 219.3 228 Z" fill="#08a8e6"/>
<path d="M 201.00 236.00 C 200.42 236.04 199.75 236.21 197.50 236.25 C 195.25 236.29 191.25 235.83 187.50 236.25 C 183.75 236.67 179.17 237.62 175.00 238.75 C 170.83 239.88 166.67 241.25 162.50 243.00 C 158.33 244.75 154.17 247.04 150.00 249.25 C 145.83 251.46 141.25 253.83 137.50 256.25 C 133.75 258.67 130.33 261.04 127.50 263.75 C 124.67 266.46 121.96 269.71 120.50 272.50 C 119.04 275.29 118.83 277.67 118.75 280.50 C 118.67 283.33 119.04 286.67 120.00 289.50 C 120.96 292.33 122.50 295.25 124.50 297.50 C 126.50 299.75 129.00 301.75 132.00 303.00 C 135.00 304.25 138.67 305.17 142.50 305.00 C 146.33 304.83 150.75 303.83 155.00 302.00 C 159.25 300.17 163.75 297.25 168.00 294.00 C 172.25 290.75 176.83 286.71 180.50 282.50 C 184.17 278.29 187.17 273.33 190.00 268.75 C 192.83 264.17 195.62 258.96 197.50 255.00 C 199.38 251.04 200.17 247.50 201.25 245.00 C 202.33 242.50 203.54 240.83 204.00 240.00 L 219.3 228 Z" fill="#08a8e6" stroke="#000" stroke-width="13.2" stroke-linejoin="round"/>
<path d="M 201.00 236.00 C 200.42 236.04 199.75 236.21 197.50 236.25 C 195.25 236.29 191.25 235.83 187.50 236.25 C 183.75 236.67 179.17 237.62 175.00 238.75 C 170.83 239.88 166.67 241.25 162.50 243.00 C 158.33 244.75 154.17 247.04 150.00 249.25 C 145.83 251.46 141.25 253.83 137.50 256.25 C 133.75 258.67 130.33 261.04 127.50 263.75 C 124.67 266.46 121.96 269.71 120.50 272.50 C 119.04 275.29 118.83 277.67 118.75 280.50 C 118.67 283.33 119.04 286.67 120.00 289.50 C 120.96 292.33 122.50 295.25 124.50 297.50 C 126.50 299.75 129.00 301.75 132.00 303.00 C 135.00 304.25 138.67 305.17 142.50 305.00 C 146.33 304.83 150.75 303.83 155.00 302.00 C 159.25 300.17 163.75 297.25 168.00 294.00 C 172.25 290.75 176.83 286.71 180.50 282.50 C 184.17 278.29 187.17 273.33 190.00 268.75 C 192.83 264.17 195.62 258.96 197.50 255.00 C 199.38 251.04 200.17 247.50 201.25 245.00 C 202.33 242.50 203.54 240.83 204.00 240.00 L 219.3 228 Z" fill="#08a8e6"/>
<path d="M 236.00 206.00 C 236.67 204.79 238.08 201.42 240.00 198.75 C 241.92 196.08 244.17 193.54 247.50 190.00 C 250.83 186.46 255.83 181.25 260.00 177.50 C 264.17 173.75 268.33 170.33 272.50 167.50 C 276.67 164.67 280.83 162.17 285.00 160.50 C 289.17 158.83 293.33 157.67 297.50 157.50 C 301.67 157.33 306.46 158.04 310.00 159.50 C 313.54 160.96 316.58 163.67 318.75 166.25 C 320.92 168.83 322.17 172.29 323.00 175.00 C 323.83 177.71 324.04 179.79 323.75 182.50 C 323.46 185.21 322.71 188.54 321.25 191.25 C 319.79 193.96 317.71 196.38 315.00 198.75 C 312.29 201.12 308.75 203.42 305.00 205.50 C 301.25 207.58 296.67 209.54 292.50 211.25 C 288.33 212.96 284.17 214.38 280.00 215.75 C 275.83 217.12 271.67 218.38 267.50 219.50 C 263.33 220.62 258.75 221.67 255.00 222.50 C 251.25 223.33 247.83 223.92 245.00 224.50 C 242.17 225.08 239.17 225.75 238.00 226.00 L 219.3 228 Z" fill="#e8188c" stroke="#000" stroke-width="13.2" stroke-linejoin="round"/>
<path d="M 236.00 206.00 C 236.67 204.79 238.08 201.42 240.00 198.75 C 241.92 196.08 244.17 193.54 247.50 190.00 C 250.83 186.46 255.83 181.25 260.00 177.50 C 264.17 173.75 268.33 170.33 272.50 167.50 C 276.67 164.67 280.83 162.17 285.00 160.50 C 289.17 158.83 293.33 157.67 297.50 157.50 C 301.67 157.33 306.46 158.04 310.00 159.50 C 313.54 160.96 316.58 163.67 318.75 166.25 C 320.92 168.83 322.17 172.29 323.00 175.00 C 323.83 177.71 324.04 179.79 323.75 182.50 C 323.46 185.21 322.71 188.54 321.25 191.25 C 319.79 193.96 317.71 196.38 315.00 198.75 C 312.29 201.12 308.75 203.42 305.00 205.50 C 301.25 207.58 296.67 209.54 292.50 211.25 C 288.33 212.96 284.17 214.38 280.00 215.75 C 275.83 217.12 271.67 218.38 267.50 219.50 C 263.33 220.62 258.75 221.67 255.00 222.50 C 251.25 223.33 247.83 223.92 245.00 224.50 C 242.17 225.08 239.17 225.75 238.00 226.00 L 219.3 228 Z" fill="#e8188c"/>
<path d="M 200.00 205.00 C 198.96 203.96 196.25 201.25 193.75 198.75 C 191.25 196.25 188.54 193.12 185.00 190.00 C 181.46 186.88 176.67 182.92 172.50 180.00 C 168.33 177.08 164.17 174.58 160.00 172.50 C 155.83 170.42 151.67 168.67 147.50 167.50 C 143.33 166.33 138.96 165.50 135.00 165.50 C 131.04 165.50 126.88 166.12 123.75 167.50 C 120.62 168.88 118.12 171.25 116.25 173.75 C 114.38 176.25 113.17 180.29 112.50 182.50 C 111.83 184.71 111.92 184.50 112.25 187.00 C 112.58 189.50 113.21 194.42 114.50 197.50 C 115.79 200.58 117.83 203.21 120.00 205.50 C 122.17 207.79 124.58 209.46 127.50 211.25 C 130.42 213.04 133.75 214.71 137.50 216.25 C 141.25 217.79 145.83 219.25 150.00 220.50 C 154.17 221.75 158.33 222.92 162.50 223.75 C 166.67 224.58 170.83 225.00 175.00 225.50 C 179.17 226.00 183.96 226.50 187.50 226.75 C 191.04 227.00 194.17 226.96 196.25 227.00 C 198.33 227.04 199.38 227.00 200.00 227.00 L 219.3 228 Z" fill="#e8188c" stroke="#000" stroke-width="13.2" stroke-linejoin="round"/>
<path d="M 200.00 205.00 C 198.96 203.96 196.25 201.25 193.75 198.75 C 191.25 196.25 188.54 193.12 185.00 190.00 C 181.46 186.88 176.67 182.92 172.50 180.00 C 168.33 177.08 164.17 174.58 160.00 172.50 C 155.83 170.42 151.67 168.67 147.50 167.50 C 143.33 166.33 138.96 165.50 135.00 165.50 C 131.04 165.50 126.88 166.12 123.75 167.50 C 120.62 168.88 118.12 171.25 116.25 173.75 C 114.38 176.25 113.17 180.29 112.50 182.50 C 111.83 184.71 111.92 184.50 112.25 187.00 C 112.58 189.50 113.21 194.42 114.50 197.50 C 115.79 200.58 117.83 203.21 120.00 205.50 C 122.17 207.79 124.58 209.46 127.50 211.25 C 130.42 213.04 133.75 214.71 137.50 216.25 C 141.25 217.79 145.83 219.25 150.00 220.50 C 154.17 221.75 158.33 222.92 162.50 223.75 C 166.67 224.58 170.83 225.00 175.00 225.50 C 179.17 226.00 183.96 226.50 187.50 226.75 C 191.04 227.00 194.17 226.96 196.25 227.00 C 198.33 227.04 199.38 227.00 200.00 227.00 L 219.3 228 Z" fill="#e8188c"/>
<path d="M 212.00 249.00 C 211.67 250.00 210.96 251.92 210.00 255.00 C 209.04 258.08 207.50 263.33 206.25 267.50 C 205.00 271.67 203.46 275.83 202.50 280.00 C 201.54 284.17 200.92 288.33 200.50 292.50 C 200.08 296.67 199.96 300.83 200.00 305.00 C 200.04 309.17 200.42 313.50 200.75 317.50 C 201.08 321.50 200.88 325.48 202.00 329.00 C 203.12 332.52 205.17 336.17 207.50 338.60 C 209.83 341.03 213.29 342.60 216.00 343.60 C 218.71 344.60 221.08 344.58 223.75 344.60 C 226.42 344.62 229.12 344.63 232.00 343.70 C 234.88 342.77 238.62 341.28 241.00 339.00 C 243.38 336.72 245.22 333.58 246.30 330.00 C 247.38 326.42 247.38 321.67 247.50 317.50 C 247.62 313.33 247.33 309.17 247.00 305.00 C 246.67 300.83 246.25 296.67 245.50 292.50 C 244.75 288.33 243.62 284.17 242.50 280.00 C 241.38 275.83 239.79 271.67 238.75 267.50 C 237.71 263.33 237.04 258.08 236.25 255.00 C 235.46 251.92 234.38 250.00 234.00 249.00 L 219.3 228 Z" fill="#e8188c" stroke="#000" stroke-width="13.2" stroke-linejoin="round"/>
<path d="M 212.00 249.00 C 211.67 250.00 210.96 251.92 210.00 255.00 C 209.04 258.08 207.50 263.33 206.25 267.50 C 205.00 271.67 203.46 275.83 202.50 280.00 C 201.54 284.17 200.92 288.33 200.50 292.50 C 200.08 296.67 199.96 300.83 200.00 305.00 C 200.04 309.17 200.42 313.50 200.75 317.50 C 201.08 321.50 200.88 325.48 202.00 329.00 C 203.12 332.52 205.17 336.17 207.50 338.60 C 209.83 341.03 213.29 342.60 216.00 343.60 C 218.71 344.60 221.08 344.58 223.75 344.60 C 226.42 344.62 229.12 344.63 232.00 343.70 C 234.88 342.77 238.62 341.28 241.00 339.00 C 243.38 336.72 245.22 333.58 246.30 330.00 C 247.38 326.42 247.38 321.67 247.50 317.50 C 247.62 313.33 247.33 309.17 247.00 305.00 C 246.67 300.83 246.25 296.67 245.50 292.50 C 244.75 288.33 243.62 284.17 242.50 280.00 C 241.38 275.83 239.79 271.67 238.75 267.50 C 237.71 263.33 237.04 258.08 236.25 255.00 C 235.46 251.92 234.38 250.00 234.00 249.00 L 219.3 228 Z" fill="#e8188c"/>
<path d="M 209.00 207.00 C 208.33 205.83 206.50 204.50 205.00 200.00 C 203.50 195.50 201.46 185.83 200.00 180.00 C 198.54 174.17 197.29 170.00 196.25 165.00 C 195.21 160.00 194.29 154.58 193.75 150.00 C 193.21 145.42 192.74 141.25 193.00 137.50 C 193.26 133.75 194.27 130.42 195.30 127.50 C 196.33 124.58 197.55 122.05 199.20 120.00 C 200.85 117.95 202.15 116.37 205.20 115.20 C 208.25 114.03 213.08 113.00 217.50 113.00 C 221.92 113.00 228.45 114.03 231.70 115.20 C 234.95 116.37 235.68 117.95 237.00 120.00 C 238.32 122.05 239.10 124.58 239.60 127.50 C 240.10 130.42 239.93 133.75 240.00 137.50 C 240.07 141.25 240.33 145.42 240.00 150.00 C 239.67 154.58 238.83 160.00 238.00 165.00 C 237.17 170.00 235.92 174.17 235.00 180.00 C 234.08 185.83 233.33 195.50 232.50 200.00 C 231.67 204.50 230.42 205.83 230.00 207.00 L 219.3 228 Z" fill="#08a8e6" stroke="#000" stroke-width="13.2" stroke-linejoin="round"/>
<path d="M 209.00 207.00 C 208.33 205.83 206.50 204.50 205.00 200.00 C 203.50 195.50 201.46 185.83 200.00 180.00 C 198.54 174.17 197.29 170.00 196.25 165.00 C 195.21 160.00 194.29 154.58 193.75 150.00 C 193.21 145.42 192.74 141.25 193.00 137.50 C 193.26 133.75 194.27 130.42 195.30 127.50 C 196.33 124.58 197.55 122.05 199.20 120.00 C 200.85 117.95 202.15 116.37 205.20 115.20 C 208.25 114.03 213.08 113.00 217.50 113.00 C 221.92 113.00 228.45 114.03 231.70 115.20 C 234.95 116.37 235.68 117.95 237.00 120.00 C 238.32 122.05 239.10 124.58 239.60 127.50 C 240.10 130.42 239.93 133.75 240.00 137.50 C 240.07 141.25 240.33 145.42 240.00 150.00 C 239.67 154.58 238.83 160.00 238.00 165.00 C 237.17 170.00 235.92 174.17 235.00 180.00 C 234.08 185.83 233.33 195.50 232.50 200.00 C 231.67 204.50 230.42 205.83 230.00 207.00 L 219.3 228 Z" fill="#08a8e6"/>
<circle cx="220" cy="228.800" r="20.500" fill="#fdee2f" stroke="#000" stroke-width="6.500"/>
</g>
<rect x="512.300" y="172.800" width="18.500" height="18.500" fill="#fff" stroke="#20242c" stroke-width="1"/>
<path d="M510.800 176.500 v-5.200 h5.500 M526.800 171.300 h5.500 v5.200 M532.300 187.800 v5.200 h-5.500 M516.300 193 h-5.500 v-5.200" fill="none" stroke="#cdd2da" stroke-width="1"/>
<text transform="translate(537 160.5) scale(0.93 1)" font-size="6.2" fill="#fff" font-weight="bold" text-anchor="start" >Layer 1</text>
<text transform="translate(537 184.5) scale(0.93 1)" font-size="6.2" fill="#fff" font-weight="bold" text-anchor="start" >Layer 2</text>
<rect x="491" y="365" width="128" height="1" fill="#3a3a3a" />
<rect x="491" y="366" width="128" height="12" fill="#535353" />
<rect x="491" y="378" width="128" height="4" fill="#484848" />
<rect x="491" y="378" width="128" height="0.8" fill="#333" />
<rect x="551" y="379.5" width="13" height="1.2" fill="#2c2c2c" />
<rect x="497.500" y="369.800" width="5.500" height="3.600" rx="1.800" fill="none" stroke="#8c8c8c" stroke-width="0.900"/><rect x="500.800" y="369.800" width="5.500" height="3.600" rx="1.800" fill="none" stroke="#8c8c8c" stroke-width="0.900"/>
<text x="514.500" y="375" font-size="9" font-style="italic" font-weight="bold" fill="#bdbdbd" style="font-family:'Liberation Serif',serif">fx</text><rect x="524" y="375" width="1.200" height="1.200" fill="#bdbdbd"/>
<rect x="531" y="368" width="9" height="7" fill="#bdbdbd"/><circle cx="535.500" cy="371.500" r="2" fill="#444"/>
<circle cx="552" cy="371.500" r="3.300" fill="#bdbdbd"/><path d="M552 368.200 a3.300 3.300 0 0 1 0 6.600z" fill="#555" transform="rotate(45 552 371.500)"/><rect x="557" y="375" width="1.200" height="1.200" fill="#bdbdbd"/>
<path d="M565 368 h3.500 l1 1 h4 v6 h-8.500z" fill="#bdbdbd"/>
<path d="M582.500 368 h6.500 v7 h-3 v-4 h-3.500z" fill="#bdbdbd"/><rect x="582.500" y="372" width="2.500" height="3" fill="#bdbdbd"/>
<path d="M599 369.500 h7 M601 369.500 v-1.200 h3 v1.200 M599.800 370.500 l0.500 5 h4.400 l0.500 -5z" fill="#9a9a9a" stroke="#9a9a9a" stroke-width="0.800"/>
<rect x="361" y="177" width="129" height="79" fill="#535353" />
<rect x="360.500" y="176.500" width="129.500" height="79.500" fill="none" stroke="#2a2a2a" stroke-width="1"/>
<rect x="361" y="177" width="129" height="8" fill="#333" />
<path d="M364.500 179.500 l3 3 m0 -3 l-3 3" stroke="#ccc" stroke-width="0.800"/>
<path d="M482 181 l2 -1.800 v3.600z M485 181 l2 -1.800 v3.600z" fill="#ccc"/>
<rect x="361" y="185" width="129" height="11" fill="#3f3f3f" />
<rect x="361" y="185" width="24" height="11" fill="#535353" />
<rect x="385" y="185" width="1" height="11" fill="#2e2e2e" />
<rect x="419" y="185" width="1" height="11" fill="#2e2e2e" />
<text transform="translate(364.5 193) scale(0.93 1)" font-size="6.2" fill="#fff" font-weight="bold" text-anchor="start" >Color</text>
<text transform="translate(389 193) scale(0.93 1)" font-size="6.2" fill="#ddd" font-weight="bold" text-anchor="start" >Swatches</text>
<path d="M478 189.500 h3 l-1.500 2z" fill="#ccc"/><rect x="482" y="188" width="5" height="5" fill="#999"/>
<rect x="371.500" y="207.500" width="10.500" height="11" fill="#999" stroke="#ddd" stroke-width="0.800"/>
<rect x="365" y="201" width="11.500" height="11.500" fill="#ec008c" stroke="#eee" stroke-width="1"/><rect x="363.800" y="199.800" width="14" height="14" fill="none" stroke="#222" stroke-width="0.800"/>
<text transform="translate(388 208.0) scale(0.93 1)" font-size="6.2" fill="#f0f0f0" font-weight="bold" text-anchor="start" >R</text>
<rect x="396.5" y="200.5" width="60" height="3" fill="url(#gr)" />
<path d="M451.7 203.8 l3.400 4.700 h-6.800z" fill="#c4c4c4" stroke="#3a3a3a" stroke-width="0.500"/>
<rect x="460" y="200.5" width="20" height="10" fill="#333" />
<rect x="460" y="200.5" width="20" height="10" fill="none" stroke="#262626" stroke-width="0.800"/>
<text x="463" y="208.0" font-size="6.2" fill="#eee" font-weight="normal" text-anchor="start" >236</text>
<text transform="translate(388 222.3) scale(0.93 1)" font-size="6.2" fill="#f0f0f0" font-weight="bold" text-anchor="start" >G</text>
<rect x="396.5" y="214.8" width="60" height="3" fill="url(#gg)" />
<path d="M396.5 218.10000000000002 l3.400 4.700 h-6.800z" fill="#c4c4c4" stroke="#3a3a3a" stroke-width="0.500"/>
<rect x="460" y="214.8" width="20" height="10" fill="#333" />
<rect x="460" y="214.8" width="20" height="10" fill="none" stroke="#262626" stroke-width="0.800"/>
<text x="463" y="222.3" font-size="6.2" fill="#eee" font-weight="normal" text-anchor="start" >0</text>
<text transform="translate(388 236.6) scale(0.93 1)" font-size="6.2" fill="#f0f0f0" font-weight="bold" text-anchor="start" >B</text>
<rect x="396.5" y="229.1" width="60" height="3" fill="url(#gb)" />
<path d="M429 232.4 l3.400 4.700 h-6.800z" fill="#c4c4c4" stroke="#3a3a3a" stroke-width="0.500"/>
<rect x="460" y="229.1" width="20" height="10" fill="#333" />
<rect x="460" y="229.1" width="20" height="10" fill="none" stroke="#262626" stroke-width="0.800"/>
<text x="463" y="236.6" font-size="6.2" fill="#eee" font-weight="normal" text-anchor="start" >140</text>
<rect x="363.5" y="245.5" width="118.5" height="8.5" fill="url(#sp)" />
<rect x="363.5" y="245.5" width="118.5" height="8.5" fill="url(#spv)" />
<rect x="482" y="245.5" width="5" height="4.3" fill="#fff" />
<rect x="482" y="249.8" width="5" height="4.2" fill="#000" />
<circle cx="424.5" cy="215.800" r="85" fill="none" stroke="#f20d0d" stroke-width="2.300"/>
<path d="M363.300 93.500 L382.500 130" stroke="#f20d0d" stroke-width="2.200" fill="none"/><path d="M375.300 125.500 L382.900 130.800 L383.300 122" stroke="#f20d0d" stroke-width="2.200" fill="none" stroke-linecap="round"/>
</svg></body></html>
